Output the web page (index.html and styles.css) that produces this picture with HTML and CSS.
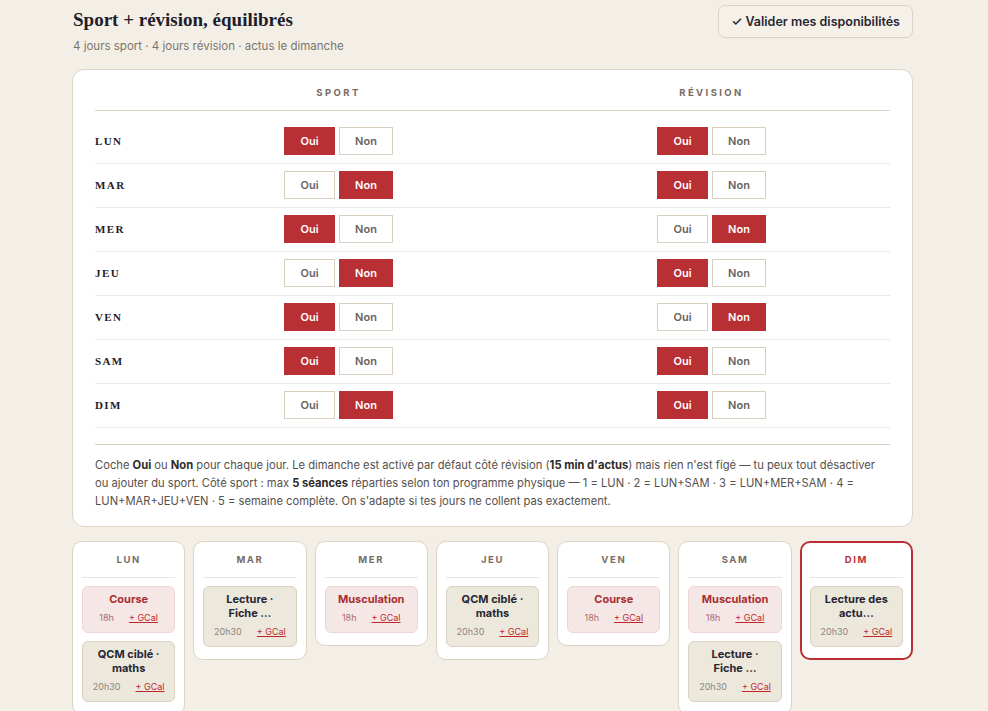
FILE: index.html
```html
<!DOCTYPE html>
<html lang="fr">
  <head>
    <meta charset="utf-8" />
    <title>Disponibilités</title>
    <link rel="stylesheet" href="styles.css">
  </head>

  <body>
    <div class="page">
      <header class="top">
        <div>
          <h1>Sport + révision, équilibrés</h1>
          <p class="sub">4 jours sport · 4 jours révision · actus le dimanche</p>
        </div>
        <button class="validate">✓ Valider mes disponibilités</button>
      </header>

      <section class="panel">
        <div class="grid grid--head">
          <span></span>
          <span class="col-title">SPORT</span>
          <span class="col-title col-rev">RÉVISION</span>
        </div>

        <div class="rows">
          <div class="grid row">
            <span class="day">LUN</span>
            <div class="pick"><button class="opt opt--on">Oui</button><button class="opt opt--non">Non</button></div>
            <div class="pick col-rev"><button class="opt opt--on">Oui</button><button class="opt opt--non">Non</button></div>
          </div>
          <div class="grid row">
            <span class="day">MAR</span>
            <div class="pick"><button class="opt">Oui</button><button class="opt opt--non opt--on">Non</button></div>
            <div class="pick col-rev"><button class="opt opt--on">Oui</button><button class="opt opt--non">Non</button></div>
          </div>
          <div class="grid row">
            <span class="day">MER</span>
            <div class="pick"><button class="opt opt--on">Oui</button><button class="opt opt--non">Non</button></div>
            <div class="pick col-rev"><button class="opt">Oui</button><button class="opt opt--non opt--on">Non</button></div>
          </div>
          <div class="grid row">
            <span class="day">JEU</span>
            <div class="pick"><button class="opt">Oui</button><button class="opt opt--non opt--on">Non</button></div>
            <div class="pick col-rev"><button class="opt opt--on">Oui</button><button class="opt opt--non">Non</button></div>
          </div>
          <div class="grid row">
            <span class="day">VEN</span>
            <div class="pick"><button class="opt opt--on">Oui</button><button class="opt opt--non">Non</button></div>
            <div class="pick col-rev"><button class="opt">Oui</button><button class="opt opt--non opt--on">Non</button></div>
          </div>
          <div class="grid row">
            <span class="day">SAM</span>
            <div class="pick"><button class="opt opt--on">Oui</button><button class="opt opt--non">Non</button></div>
            <div class="pick col-rev"><button class="opt opt--on">Oui</button><button class="opt opt--non">Non</button></div>
          </div>
          <div class="grid row">
            <span class="day">DIM</span>
            <div class="pick"><button class="opt">Oui</button><button class="opt opt--non opt--on">Non</button></div>
            <div class="pick col-rev"><button class="opt opt--on">Oui</button><button class="opt opt--non">Non</button></div>
          </div>
        </div>

        <p class="notes">Coche <b>Oui</b> ou <b>Non</b> pour chaque jour. Le dimanche est activé par défaut côté révision (<b>15 min d'actus</b>) mais rien n'est figé — tu peux tout désactiver ou ajouter du sport. Côté sport : max <b>5 séances</b> réparties selon ton programme physique — 1 = LUN · 2 = LUN+SAM · 3 = LUN+MER+SAM · 4 = LUN+MAR+JEU+VEN · 5 = semaine complète. On s'adapte si tes jours ne collent pas exactement.</p>
      </section>

      <section class="week">
        <div class="daycard">
          <h3>LUN</h3>
          <div class="ev ev--sport"><strong>Course</strong><div class="meta"><span>18h</span><a href="#">+ GCal</a></div></div>
          <div class="ev"><strong>QCM ciblé · maths</strong><div class="meta"><span>20h30</span><a href="#">+ GCal</a></div></div>
        </div>
        <div class="daycard">
          <h3>MAR</h3>
          <div class="ev"><strong>Lecture · Fiche&nbsp;…</strong><div class="meta"><span>20h30</span><a href="#">+ GCal</a></div></div>
        </div>
        <div class="daycard">
          <h3>MER</h3>
          <div class="ev ev--sport"><strong>Musculation</strong><div class="meta"><span>18h</span><a href="#">+ GCal</a></div></div>
        </div>
        <div class="daycard">
          <h3>JEU</h3>
          <div class="ev"><strong>QCM ciblé · maths</strong><div class="meta"><span>20h30</span><a href="#">+ GCal</a></div></div>
        </div>
        <div class="daycard">
          <h3>VEN</h3>
          <div class="ev ev--sport"><strong>Course</strong><div class="meta"><span>18h</span><a href="#">+ GCal</a></div></div>
        </div>
        <div class="daycard">
          <h3>SAM</h3>
          <div class="ev ev--sport"><strong>Musculation</strong><div class="meta"><span>18h</span><a href="#">+ GCal</a></div></div>
          <div class="ev"><strong>Lecture · Fiche&nbsp;…</strong><div class="meta"><span>20h30</span><a href="#">+ GCal</a></div></div>
        </div>
        <div class="daycard daycard--today">
          <h3>DIM</h3>
          <div class="ev"><strong>Lecture des actu…</strong><div class="meta"><span>20h30</span><a href="#">+ GCal</a></div></div>
        </div>
      </section>
    </div>
  </body>
</html>
```

FILE: styles.css
```css
:root {
  font-family: Inter, 'Noto Sans', sans-serif;
  font-size: 12px;
  color: #2a2a36;
}

body {
  margin: 0;
  background: #f4efe6;
}

.page {
  width: 841px;
  margin-left: 72px;
}

.top {
  display: flex;
  justify-content: space-between;
  align-items: flex-start;
  padding-top: 5px;
}

h1 {
  margin: 4px 0 0 1px;
  font-family: 'Liberation Serif', serif;
  font-size: 19px;
  line-height: 22px;
  font-weight: bold;
  color: #1d1d2b;
}

.sub {
  margin: 8px 0 0 1px;
  font-size: 11.5px;
  color: #7b746e;
}

.validate {
  height: 33px;
  padding: 0 12px;
  border: 1px solid #dcd2c1;
  border-radius: 7px;
  background: #f6f1e8;
  font-family: inherit;
  font-size: 12.5px;
  font-weight: 600;
  color: #262633;
}

.panel {
  margin-top: 16px;
  padding: 16px 22px 16px;
  background: #fff;
  border: 1px solid #ddd5c6;
  border-radius: 12px;
}

.grid {
  display: grid;
  grid-template-columns: 57px 373px 367px;
  align-items: center;
}

.grid--head {
  padding-bottom: 10px;
  border-bottom: 1px solid #dcd3c3;
}

.col-title {
  text-align: center;
  font-size: 9.5px;
  line-height: 14px;
  font-weight: 700;
  letter-spacing: 2.4px;
  color: #776b62;
}

.col-rev {
  padding-left: 6px;
}

.rows {
  margin-top: 9px;
}

.row {
  padding: 7px 0 8px;
  border-bottom: 1px solid #efeae1;
}

.day {
  font-family: 'Liberation Serif', serif;
  font-weight: bold;
  font-size: 11px;
  letter-spacing: 1.4px;
  color: #1d1d2b;
}

.pick {
  display: flex;
  justify-content: center;
  gap: 4px;
}

.opt {
  width: 51px;
  height: 28px;
  padding: 0;
  background: #fff;
  border: 1px solid #d8cfc0;
  font-family: inherit;
  font-size: 11px;
  font-weight: 600;
  color: #6a625d;
}

.opt--non {
  width: 54px;
}

.opt--on {
  background: #b83033;
  border-color: #b83033;
  color: #fff;
}

.notes {
  margin: 16px 0 0;
  padding-top: 11px;
  border-top: 1px solid #d9d0c0;
  font-size: 11.2px;
  line-height: 18px;
  color: #56504c;
}

.notes b {
  color: #2d2a2a;
}

.week {
  display: grid;
  grid-template-columns: repeat(7, 1fr);
  gap: 8px;
  align-items: start;
  margin-top: 14px;
}

.daycard {
  padding: 11px 9px 12px;
  background: #fff;
  border: 1px solid #ddd4c4;
  border-radius: 10px;
}

.daycard h3 {
  margin: 0 0 8px;
  padding-bottom: 10px;
  border-bottom: 1px solid #ebe5db;
  text-align: center;
  font-size: 9.5px;
  line-height: 14px;
  font-weight: 700;
  letter-spacing: 1.6px;
  color: #776d66;
}

.daycard--today {
  border: 2px solid #b83033;
  padding: 10px 8px 11px;
}

.daycard--today h3 {
  color: #b83033;
}

.ev {
  margin-bottom: 8px;
  padding: 5px 6px 8px;
  background: #ede8dc;
  border: 1px solid #d9d1c1;
  border-radius: 6px;
  text-align: center;
}

.ev:last-child {
  margin-bottom: 0;
}

.ev strong {
  display: block;
  font-size: 11px;
  line-height: 14px;
  font-weight: 700;
  color: #262633;
}

.ev--sport {
  background: #f6e7e7;
  border-color: #eed4d4;
}

.ev--sport strong {
  color: #a82e30;
}

.meta {
  display: flex;
  justify-content: center;
  gap: 15px;
  margin-top: 6px;
  font-size: 9px;
  line-height: 12px;
  color: #8a847e;
}

.ev--sport .meta span {
  color: #a86b6b;
}

.meta a {
  color: #c0272d;
  text-decoration: underline;
}
```
